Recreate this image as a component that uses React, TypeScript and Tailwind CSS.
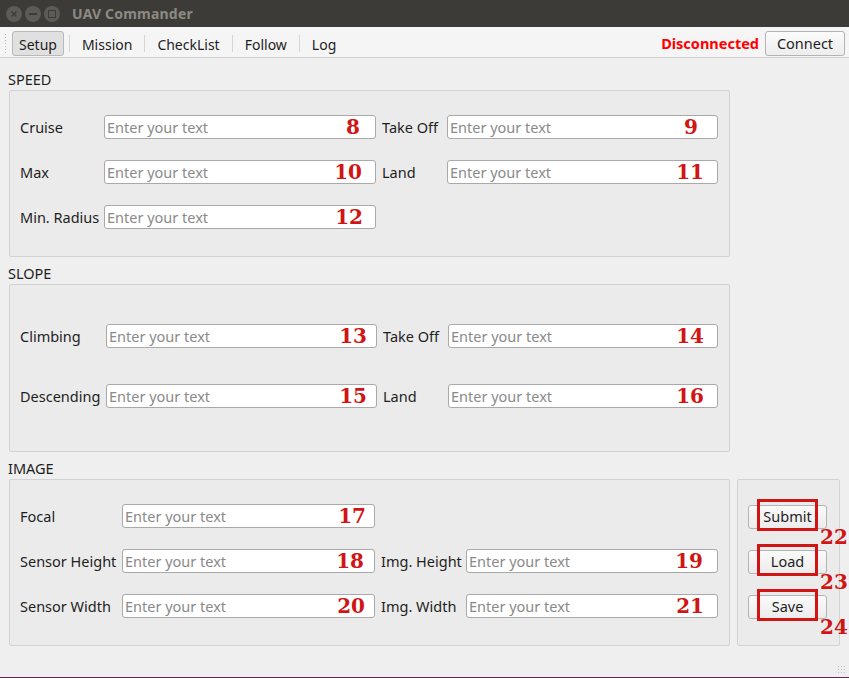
import React from 'react';

type Field = {
    label: string;
    num: string;
    numPos: string;
};

type Row = {
    left: Field;
    right?: Field;
};

const font = "font-['Noto_Sans','DejaVu_Sans',sans-serif]";

const NumTag: React.FC<{ n: string; pos: string }> = ({ n, pos }) => (
    <span
        className={`absolute top-1/2 -translate-y-1/2 ${pos} font-['DejaVu_Serif',serif] font-bold text-[20px] leading-none text-[#d01515]`}
    >
        {n}
    </span>
);

const Input: React.FC<{ width: string; num: string; numPos: string }> = ({ width, num, numPos }) => (
    <div className={`relative ${width} h-[24px]`}>
        <input
            placeholder="Enter your text"
            className="w-full h-full bg-white border border-[#a9a9a9] rounded-[3px] pl-[2px] text-[14.5px] text-[#222] placeholder:text-[#8a8a8a] outline-none"
        />
        <NumTag n={num} pos={numPos} />
    </div>
);

const FieldRow: React.FC<{
    row: Row;
    labelW: string;
    inputW: string;
    label2W: string;
    input2W: string;
}> = ({ row, labelW, inputW, label2W, input2W }) => (
    <div className="flex items-center h-[24px]">
        <span className={`${labelW} pt-[1px] text-[14.5px] text-[#1e1e1e] whitespace-nowrap`}>{row.left.label}</span>
        <Input width={inputW} num={row.left.num} numPos={row.left.numPos} />
        {row.right && (
            <>
                <span className={`ml-[6px] ${label2W} pt-[1px] text-[14.5px] text-[#1e1e1e] whitespace-nowrap`}>{row.right.label}</span>
                <Input width={input2W} num={row.right.num} numPos={row.right.numPos} />
            </>
        )}
    </div>
);

const SectionLabel: React.FC<{ text: string }> = ({ text }) => (
    <div className="h-[22px] leading-[22px] pl-[8px] text-[14.5px] text-[#1e1e1e]">{text}</div>
);

const ActionButton: React.FC<{ text: string; num: string }> = ({ text, num }) => (
    <div className="relative w-[79px] h-[24px]">
        <button className="w-full h-full rounded-[3px] border border-[#b4b4b4] bg-gradient-to-b from-[#fafafa] to-[#ececec] text-[14.5px] text-[#1e1e1e]">
            {text}
        </button>
        {/* annotation frame */}
        <div className="absolute left-[9px] right-[9px] top-[-5px] bottom-[-3px] border-[3px] border-[#d01515] pointer-events-none" />
        <span className="absolute left-[72px] top-[23px] font-['DejaVu_Serif',serif] font-bold text-[20px] leading-none text-[#d01515]">
            {num}
        </span>
    </div>
);

const speedRows: Row[] = [
    { left: { label: 'Cruise', num: '8', numPos: 'right-[16px]' }, right: { label: 'Take Off', num: '9', numPos: 'right-[20px]' } },
    { left: { label: 'Max', num: '10', numPos: 'right-[14px]' }, right: { label: 'Land', num: '11', numPos: 'right-[14px]' } },
    { left: { label: 'Min. Radius', num: '12', numPos: 'right-[13px]' } },
];

const slopeRows: Row[] = [
    { left: { label: 'Climbing', num: '13', numPos: 'right-[10px]' }, right: { label: 'Take Off', num: '14', numPos: 'right-[14px]' } },
    { left: { label: 'Descending', num: '15', numPos: 'right-[10px]' }, right: { label: 'Land', num: '16', numPos: 'right-[14px]' } },
];

const imageRows: Row[] = [
    { left: { label: 'Focal', num: '17', numPos: 'right-[9px]' } },
    { left: { label: 'Sensor Height', num: '18', numPos: 'right-[11px]' }, right: { label: 'Img. Height', num: '19', numPos: 'right-[15px]' } },
    { left: { label: 'Sensor Width', num: '20', numPos: 'right-[10px]' }, right: { label: 'Img. Width', num: '21', numPos: 'right-[14px]' } },
];

const tabs = ['Setup', 'Mission', 'CheckList', 'Follow', 'Log'];

const App: React.FC = () => {
    return (
        <div className={`w-[849px] h-[678px] bg-[#efefef] flex flex-col overflow-hidden ${font}`}>
            {/* Title bar */}
            <div className="h-[27px] bg-[#3c3b37] flex items-center pl-[6px] shrink-0">
                <div className="flex items-center gap-[3px]">
                    {['x', '-', 'o'].map((g) => (
                        <div key={g} className="w-[16px] h-[16px] rounded-full bg-[#5c5b56] flex items-center justify-center">
                            {g === 'x' && (
                                <svg width="8" height="8" viewBox="0 0 8 8">
                                    <path d="M1.5 1.5 L6.5 6.5 M6.5 1.5 L1.5 6.5" stroke="#3c3b37" strokeWidth="1.4" />
                                </svg>
                            )}
                            {g === '-' && <div className="w-[8px] h-[2px] bg-[#3c3b37]" />}
                            {g === 'o' && <div className="w-[8px] h-[8px] border-[1.5px] border-[#3c3b37]" />}
                        </div>
                    ))}
                </div>
                <span className="ml-[12px] text-[14px] font-bold text-[#8c8a85] tracking-[0.2px]">UAV Commander</span>
            </div>

            {/* Toolbar */}
            <div className="h-[31px] bg-[#f5f5f5] border-b border-[#cfcfcf] flex items-center shrink-0 pt-[2px]">
                <div className="ml-[4px] w-[3px] h-[20px] bg-[radial-gradient(#b8b8b8_0.8px,transparent_1px)] bg-[length:3px_3px]" />
                <div className="flex items-center ml-[5px]">
                    {tabs.map((t, i) => (
                        <React.Fragment key={t}>
                            {i > 0 && <div className="w-px h-[17px] bg-[#d6d6d6] mx-[5px]" />}
                            <div
                                className={`h-[25px] flex items-center px-[6px] pt-[2px] text-[14px] text-[#1e1e1e] rounded-[3px] ${
                                    i === 0 ? 'bg-[#e0e0e0] border border-[#b9b9b9]' : 'border border-transparent'
                                }`}
                            >
                                {t}
                            </div>
                        </React.Fragment>
                    ))}
                </div>
                <div className="ml-auto flex items-center">
                    <span className="text-[14.5px] font-bold text-[#ff0000] mr-[6px] pt-[2px]">Disconnected</span>
                    <button className="w-[80px] h-[25px] rounded-[3px] border border-[#b4b4b4] bg-gradient-to-b from-[#fbfbfb] to-[#ededed] text-[14.5px] text-[#1e1e1e] mr-[4px] pt-[1px]">
                        Connect
                    </button>
                </div>
            </div>

            {/* Content */}
            <div className="pt-[10px] flex flex-col">
                <SectionLabel text="SPEED" />
                <div className="ml-[9px] w-[721px] h-[167px] bg-[#ebebeb] border border-[#d3d3d3] rounded-[2px] pl-[10px] pt-[24px] flex flex-col gap-[21px]">
                    {speedRows.map((r) => (
                        <FieldRow key={r.left.label} row={r} labelW="w-[84px]" inputW="w-[272px]" label2W="w-[65px]" input2W="w-[271px]" />
                    ))}
                </div>

                <div className="mt-[5px]">
                    <SectionLabel text="SLOPE" />
                </div>
                <div className="ml-[9px] w-[721px] h-[168px] bg-[#ebebeb] border border-[#d3d3d3] rounded-[2px] pl-[10px] pt-[39px] flex flex-col gap-[36px]">
                    {slopeRows.map((r) => (
                        <FieldRow key={r.left.label} row={r} labelW="w-[86px]" inputW="w-[271px]" label2W="w-[65px]" input2W="w-[270px]" />
                    ))}
                </div>

                <div className="mt-[5px]">
                    <SectionLabel text="IMAGE" />
                </div>
                <div className="flex">
                    <div className="ml-[9px] w-[721px] h-[167px] bg-[#ebebeb] border border-[#d3d3d3] rounded-[2px] pl-[10px] pt-[24px] flex flex-col gap-[21px]">
                        {imageRows.map((r) => (
                            <FieldRow key={r.left.label} row={r} labelW="w-[102px]" inputW="w-[253px]" label2W="w-[85px]" input2W="w-[252px]" />
                        ))}
                    </div>
                    <div className="ml-[7px] w-[103px] h-[167px] bg-[#ebebeb] border border-[#d3d3d3] rounded-[2px] pl-[10px] pt-[24px] flex flex-col gap-[21px]">
                        <ActionButton text="Submit" num="22" />
                        <ActionButton text="Load" num="23" />
                        <ActionButton text="Save" num="24" />
                    </div>
                </div>
            </div>

            {/* Bottom edge with size grip */}
            <div className="mt-auto relative h-[1px] bg-[#5e2750]">
                <div className="absolute right-[2px] bottom-[3px] w-[10px] h-[10px] bg-[radial-gradient(#bdbdbd_0.8px,transparent_1px)] bg-[length:3px_3px]" />
            </div>
        </div>
    );
};

export default App;
